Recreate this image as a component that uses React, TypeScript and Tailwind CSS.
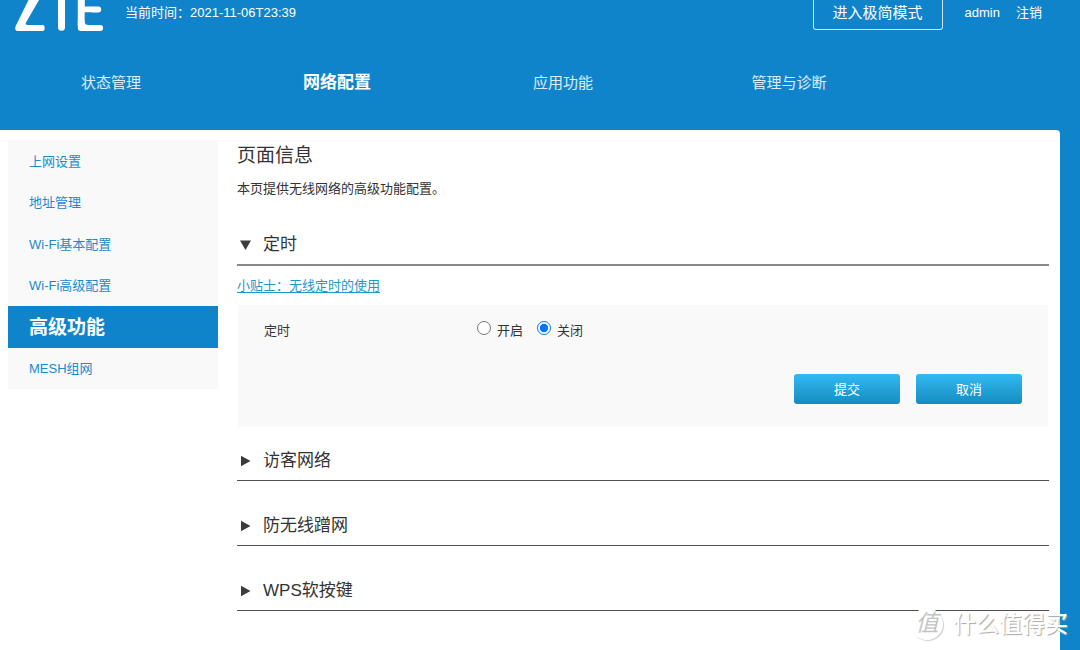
import { useState } from 'react';

const NAV = ['状态管理', '网络配置', '应用功能', '管理与诊断'];
const MENU = ['上网设置', '地址管理', 'Wi-Fi基本配置', 'Wi-Fi高级配置', '高级功能', 'MESH组网'];

function Logo() {
  return (
    <svg
      className="h-8 w-[90px] shrink-0"
      viewBox="14 0 90 32"
      fill="none"
      stroke="#fff"
      strokeLinecap="round"
      role="img"
      aria-label="ZTE"
    >
      <path
        d="M28.5 0L15.6 26.2Q14 31 18 31H42.6Q44.6 31 44.6 29V27Q44.6 25 42.6 25H27Q25 24.6 26 22.6L39 0Z"
        fill="#fff"
        stroke="none"
      />
      <path d="M61.5 -6V27.3" strokeWidth="7" />
      <path d="M81.3 -6V25" strokeWidth="7" strokeLinecap="butt" />
      <path d="M82 9.5H98.3M82 28H100.2" strokeWidth="5.8" />
      <path d="M77.8 20V28Q77.8 31 81 31H88V20Z" fill="#fff" stroke="none" />
      <path d="M84.8 12.4H92V25H88.5Q84.8 25 84.8 22Z" fill="#1084cb" stroke="none" />
    </svg>
  );
}

function SectionHeader({ title, open, onToggle }: { title: string; open: boolean; onToggle: () => void }) {
  return (
    <h2 className={open ? 'border-b-2 border-[#898989]' : 'border-b border-[#505050]'}>
      <button
        type="button"
        aria-expanded={open}
        onClick={onToggle}
        className="flex h-10 w-full items-center gap-3 pl-0.5 pt-0.5 text-left text-[17px] leading-6 text-[#333]"
      >
        <svg className="h-3 w-3 shrink-0" viewBox="0 0 12 12" fill="#3b3b3b" aria-hidden="true">
          {open ? <path d="M1 1.5h11L6.5 11z" /> : <path d="M2 .8 11.5 6 2 11.2z" />}
        </svg>
        {title}
      </button>
    </h2>
  );
}

const actionClass =
  'h-[30px] w-[106px] rounded-[3px] bg-gradient-to-b from-[#33baf3] to-[#128cc0] pt-0.5 text-[13px] leading-5 text-white';

export default function App() {
  const [timer, setTimer] = useState('off');
  const [open, setOpen] = useState<string[]>(['定时']);
  const toggle = (name: string) =>
    setOpen((list) => (list.includes(name) ? list.filter((n) => n !== name) : [...list, name]));

  return (
    <div className="flex min-h-screen flex-col overflow-hidden bg-[#1084cb] pr-5 font-['Liberation_Sans','Noto_Sans_CJK_SC',sans-serif] text-[13px] leading-5 text-[#333]">
      <header className="text-white">
        <div className="flex h-8 items-start pl-3.5 pr-[18px]">
          <Logo />
          <p className="ml-[21px] mt-[3px]">当前时间：2021-11-06T23:39</p>
          <div className="ml-auto flex items-start">
            <button
              type="button"
              className="mr-[22px] h-[30px] w-[130px] rounded-b-[3px] border border-t-0 border-white/80 pb-1 text-[15px] leading-5"
            >
              进入极简模式
            </button>
            <a href="#account" className="mr-4 mt-[3px]">
              admin
            </a>
            <a href="#logout" className="mt-[3px]">
              注销
            </a>
          </div>
        </div>
        <nav className="-ml-0.5 mr-[158px] grid h-[98px] grid-cols-4 items-center pt-1 text-center">
          {NAV.map((item) => (
            <a
              key={item}
              href="#nav"
              className={
                item === '网络配置' ? 'text-[17px] font-bold leading-6' : 'text-[15px] leading-6 text-white/85'
              }
            >
              {item}
            </a>
          ))}
        </nav>
      </header>

      <div className="flex flex-1 items-start gap-[19px] rounded-tr-[4px] bg-white pl-2 pr-[11px] pt-2.5">
        <aside className="grid min-h-[249px] w-[210px] shrink-0 grid-rows-6 bg-[#f9f9f9]">
          {MENU.map((item) => (
            <a
              key={item}
              href="#menu"
              className={
                item === '高级功能'
                  ? 'flex items-center bg-[#1084cb] pl-[21px] pt-0.5 text-[19px] font-bold leading-6 text-white'
                  : 'flex items-center pl-[21px] pt-0.5 text-[#1a8bcd]'
              }
            >
              {item}
            </a>
          ))}
        </aside>

        <main className="min-w-0 flex-1 pt-0.5">
          <h1 className="text-[19px] leading-7">页面信息</h1>
          <p className="mt-[9px]">本页提供无线网络的高级功能配置。</p>

          <section className="mt-[25px]">
            <SectionHeader title="定时" open={open.includes('定时')} onToggle={() => toggle('定时')} />
            {open.includes('定时') && (
              <>
                <a href="#tips" className="mt-2.5 block w-fit text-[#1f98c6] underline underline-offset-2">
                  小贴士：无线定时的使用
                </a>
                <form
                  className="mx-px mt-[9px] h-[122px] bg-[#f9f9f9] pl-[26px] pr-[26px] pt-4"
                  onSubmit={(e) => e.preventDefault()}
                >
                  <fieldset className="flex">
                    <legend className="float-left w-[213px]">定时</legend>
                    <label className="mr-3.5 flex gap-1.5">
                      <input
                        type="radio"
                        name="timer"
                        className="h-3.5 w-3.5"
                        checked={timer === 'on'}
                        onChange={() => setTimer('on')}
                      />
                      开启
                    </label>
                    <label className="flex gap-1.5">
                      <input
                        type="radio"
                        name="timer"
                        className="h-3.5 w-3.5"
                        checked={timer === 'off'}
                        onChange={() => setTimer('off')}
                      />
                      关闭
                    </label>
                  </fieldset>
                  <div className="mt-[33px] flex justify-end gap-4">
                    <button type="submit" className={actionClass}>
                      提交
                    </button>
                    <button type="button" className={actionClass}>
                      取消
                    </button>
                  </div>
                </form>
              </>
            )}
          </section>

          <div className="mt-[13px] space-y-6">
            {['访客网络', '防无线蹭网', 'WPS软按键'].map((name) => (
              <SectionHeader key={name} title={name} open={open.includes(name)} onToggle={() => toggle(name)} />
            ))}
          </div>
        </main>
      </div>

      <div className="pointer-events-none absolute bottom-2.5 right-3 flex items-center gap-2.5 text-white">
        <span className="flex h-8 w-8 items-center justify-center rounded-full bg-white pb-0.5 text-[23px] italic leading-7 text-[#c4c4c4] shadow-[1px_1px_1px_#d0d0d0]">
          值
        </span>
        <span className="text-[23px] font-medium leading-8 [text-shadow:1px_1px_1px_#a8a8a8]">什么值得买</span>
      </div>
    </div>
  );
}
